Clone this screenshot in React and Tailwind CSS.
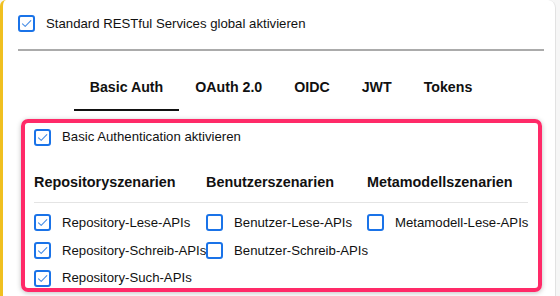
import React from "react";

function Box({ checked }) {
  return (
    <div className="w-[17px] h-[17px] shrink-0 rounded-[3px] border-2 border-[#1a73e8] bg-white flex items-center justify-center">
      {checked && (
        <svg width="13" height="13" viewBox="0 0 13 13" fill="none">
          <path d="M2.5 6.8 L5.2 9.4 L10.8 3.6" stroke="#4a8fe6" strokeWidth="1.1" strokeLinecap="round" strokeLinejoin="round" />
        </svg>
      )}
    </div>
  );
}

function Item({ checked, label }) {
  return (
    <div className="flex items-center h-[27.7px]">
      <Box checked={checked} />
      <span className="ml-[11px] whitespace-nowrap">{label}</span>
    </div>
  );
}

export default function App() {
  const tabs = ["Basic Auth", "OAuth 2.0", "OIDC", "JWT", "Tokens"];
  return (
    <div className="w-[560px] h-[296px] overflow-hidden bg-[#f6f6f6] font-['Liberation_Sans',Arial,sans-serif] text-[13.2px] text-[#111]">
      <div className="w-[556px] h-[296px] bg-white border-l-[3px] border-l-[#f0c020] border-r border-r-[#e2e2e2] rounded-tl-[6px] rounded-tr-[8px] pl-[15px] pr-[11px] pt-[15px]">
        <div className="flex items-center h-[17px]">
          <Box checked />
          <span className="ml-[11px] mt-[1px]">Standard RESTful Services global aktivieren</span>
        </div>
        <div className="mt-[17px] h-[2px] bg-[#ababab]" />
        <div className="mt-[16px] flex justify-center text-[14.2px]">
          {tabs.map((t, i) => (
            <div
              key={t}
              className={
                i === 0
                  ? "h-[44px] px-[16px] flex items-center font-bold border-b-2 border-b-[#111]"
                  : "h-[44px] px-[16px] flex items-center font-bold border-b-2 border-b-transparent"
              }
            >
              {t}
            </div>
          ))}
        </div>
        <div className="mt-[8px] ml-[3px] mr-[2px] h-[173px] overflow-hidden rounded-[7px] border-[4px] border-[#ff2a68] shadow-[0_1px_5px_rgba(0,0,0,0.25)] pl-[9px] pr-[10px]">
          <div className="flex items-center h-[26px] mt-[1px]">
            <Box checked />
            <span className="ml-[11px]">Basic Authentication aktivieren</span>
          </div>
          <div className="flex mt-[23px] font-bold text-[14.4px] h-[20px] items-center">
            <div className="w-[172px]">Repositoryszenarien</div>
            <div className="w-[161px]">Benutzerszenarien</div>
            <div className="flex-1">Metamodellszenarien</div>
          </div>
          <div className="mt-[9px] h-px bg-[#e4e4e4]" />
          <div className="flex mt-[6px]">
            <div className="w-[172px]">
              <Item checked label="Repository-Lese-APIs" />
              <Item checked label="Repository-Schreib-APIs" />
              <Item checked label="Repository-Such-APIs" />
            </div>
            <div className="w-[161px]">
              <Item label="Benutzer-Lese-APIs" />
              <Item label="Benutzer-Schreib-APIs" />
            </div>
            <div className="flex-1">
              <Item label="Metamodell-Lese-APIs" />
            </div>
          </div>
        </div>
      </div>
    </div>
  );
}
